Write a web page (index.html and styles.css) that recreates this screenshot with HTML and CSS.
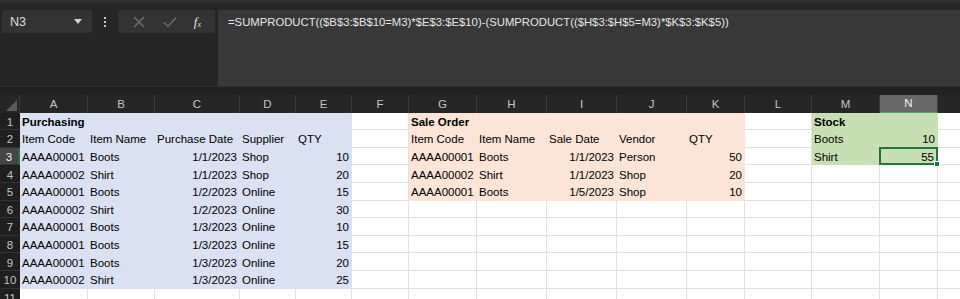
FILE: index.html
```html
<!DOCTYPE html>
<html>
<head>
<meta charset="utf-8">
<link rel="stylesheet" href="styles.css">
</head>
<body>
<div class="app">
  <div class="topstrip"></div>
  <div class="fbar">
    <div class="left">
      <div class="namebox"><span>N3</span><span class="caret"></span></div>
      <div class="kebab"><i></i><i></i><i></i></div>
      <div class="btns">
        <svg class="ico" width="14" height="14" viewBox="0 0 14 14"><path d="M2 2 L12 12 M12 2 L2 12" stroke="#6e6e6e" stroke-width="1.4" fill="none"/></svg>
        <svg class="ico" width="16" height="14" viewBox="0 0 16 14"><path d="M2 7.5 L6 11.5 L14 2.5" stroke="#6e6e6e" stroke-width="1.5" fill="none"/></svg>
        <span class="fx">f<sub>x</sub></span>
      </div>
    </div>
    <div class="formula">=SUMPRODUCT(($B$3:$B$10=M3)*$E$3:$E$10)-(SUMPRODUCT(($H$3:$H$5=M3)*$K$3:$K$5))</div>
  </div>
  <div class="gap"></div>
  <table class="sheet">
    <colgroup>
      <col class="w20"><col class="w68"><col class="w67"><col class="w85"><col class="w56"><col class="w56"><col class="w57"><col class="w68"><col class="w70"><col class="w70"><col class="w70"><col class="w58"><col class="w67"><col class="w68"><col class="w58"><col class="w60">
    </colgroup>
    <tr class="hdr">
      <th class="corner"><span class="tri"></span></th><th>A</th><th>B</th><th>C</th><th>D</th><th>E</th><th>F</th><th>G</th><th>H</th><th>I</th><th>J</th><th>K</th><th>L</th><th>M</th><th class="sel">N</th><th></th>
    </tr>
    <tr>
      <th class="rh">1</th><td class="b bold">Purchasing</td><td class="b"></td><td class="b"></td><td class="b"></td><td class="b"></td><td></td><td class="p bold">Sale Order</td><td class="p"></td><td class="p"></td><td class="p"></td><td class="p"></td><td></td><td class="g bold">Stock</td><td class="g"></td><td></td>
    </tr>
    <tr>
      <th class="rh">2</th><td class="b">Item Code</td><td class="b">Item Name</td><td class="b">Purchase Date</td><td class="b">Supplier</td><td class="b">QTY</td><td></td><td class="p">Item Code</td><td class="p">Item Name</td><td class="p">Sale Date</td><td class="p">Vendor</td><td class="p">QTY</td><td></td><td class="g">Boots</td><td class="g n">10</td><td></td>
    </tr>
    <tr>
      <th class="rh rsel">3</th><td class="b">AAAA00001</td><td class="b">Boots</td><td class="b n">1/1/2023</td><td class="b">Shop</td><td class="b n">10</td><td></td><td class="p">AAAA00001</td><td class="p">Boots</td><td class="p n">1/1/2023</td><td class="p">Person</td><td class="p n">50</td><td></td><td class="g">Shirt</td><td class="g n active"><div class="act">55<span class="handle"></span></div></td><td></td>
    </tr>
    <tr>
      <th class="rh">4</th><td class="b">AAAA00002</td><td class="b">Shirt</td><td class="b n">1/1/2023</td><td class="b">Shop</td><td class="b n">20</td><td></td><td class="p">AAAA00002</td><td class="p">Shirt</td><td class="p n">1/1/2023</td><td class="p">Shop</td><td class="p n">20</td><td></td><td></td><td></td><td></td>
    </tr>
    <tr>
      <th class="rh">5</th><td class="b">AAAA00001</td><td class="b">Boots</td><td class="b n">1/2/2023</td><td class="b">Online</td><td class="b n">15</td><td></td><td class="p">AAAA00001</td><td class="p">Boots</td><td class="p n">1/5/2023</td><td class="p">Shop</td><td class="p n">10</td><td></td><td></td><td></td><td></td>
    </tr>
    <tr>
      <th class="rh">6</th><td class="b">AAAA00002</td><td class="b">Shirt</td><td class="b n">1/2/2023</td><td class="b">Online</td><td class="b n">30</td><td></td><td></td><td></td><td></td><td></td><td></td><td></td><td></td><td></td><td></td>
    </tr>
    <tr>
      <th class="rh">7</th><td class="b">AAAA00001</td><td class="b">Boots</td><td class="b n">1/3/2023</td><td class="b">Online</td><td class="b n">10</td><td></td><td></td><td></td><td></td><td></td><td></td><td></td><td></td><td></td><td></td>
    </tr>
    <tr>
      <th class="rh">8</th><td class="b">AAAA00001</td><td class="b">Boots</td><td class="b n">1/3/2023</td><td class="b">Online</td><td class="b n">15</td><td></td><td></td><td></td><td></td><td></td><td></td><td></td><td></td><td></td><td></td>
    </tr>
    <tr>
      <th class="rh">9</th><td class="b">AAAA00001</td><td class="b">Boots</td><td class="b n">1/3/2023</td><td class="b">Online</td><td class="b n">20</td><td></td><td></td><td></td><td></td><td></td><td></td><td></td><td></td><td></td><td></td>
    </tr>
    <tr>
      <th class="rh">10</th><td class="b">AAAA00002</td><td class="b">Shirt</td><td class="b n">1/3/2023</td><td class="b">Online</td><td class="b n">25</td><td></td><td></td><td></td><td></td><td></td><td></td><td></td><td></td><td></td><td></td>
    </tr>
    <tr>
      <th class="rh">11</th><td></td><td></td><td></td><td></td><td></td><td></td><td></td><td></td><td></td><td></td><td></td><td></td><td></td><td></td><td></td>
    </tr>
  </table>
</div>
</body>
</html>
```

FILE: styles.css
```css
* { box-sizing: border-box; }
html, body { margin: 0; padding: 0; }
body {
  width: 960px;
  height: 299px;
  overflow: hidden;
  background: #1f1f1f;
  font-family: "Liberation Sans", Arial, sans-serif;
}
.app { width: 960px; }
.topstrip {
  height: 10px;
  background: #262626;
  border-top: 3px solid #303030;
}
.fbar {
  display: flex;
  height: 76px;
  background: #262626;
}
.left {
  display: flex;
  align-items: flex-start;
  width: 218px;
  flex: none;
}
.namebox {
  margin-left: 2px;
  width: 90px;
  height: 23px;
  background: #333333;
  border-radius: 2px;
  display: flex;
  align-items: center;
  justify-content: space-between;
  padding: 0 8px 0 8px;
  color: #dcdcdc;
  font-size: 12.5px;
}
.caret {
  width: 0; height: 0;
  border-left: 4px solid transparent;
  border-right: 4px solid transparent;
  border-top: 5px solid #d0d0d0;
  margin-right: 2px;
}
.kebab {
  width: 26px;
  height: 23px;
  display: flex;
  flex-direction: column;
  align-items: center;
  justify-content: center;
  gap: 2px;
}
.kebab i {
  display: block;
  width: 2px; height: 2px;
  background: #c8c8c8;
}
.btns {
  width: 97px;
  height: 23px;
  background: #333333;
  border-radius: 2px;
  display: flex;
  align-items: center;
  justify-content: space-around;
  padding: 0 6px;
}
.fx {
  font-family: "Liberation Serif", serif;
  font-style: italic;
  color: #e0e0e0;
  font-size: 13px;
  line-height: 1;
}
.fx sub { font-size: 8px; vertical-align: -1px; }
.formula {
  flex: 1;
  height: 76px;
  background: #383838;
  border-radius: 2px 0 0 2px;
  color: #e6e6e6;
  font-size: 11.3px;
  padding: 6px 0 0 10px;
}
.gap { height: 9px; background: #212121; border-top: 1px solid #2e2e2e; }
.sheet {
  table-layout: fixed;
  border-collapse: separate;
  border-spacing: 0;
  width: 998px;
  font-size: 11.5px;
  color: #000;
}
.w20 { width: 20px; } .w56 { width: 56px; } .w57 { width: 57px; } .w58 { width: 58px; }
.w60 { width: 60px; } .w67 { width: 67px; } .w68 { width: 68px; } .w70 { width: 70px; } .w85 { width: 85px; }
.hdr th {
  height: 17px;
  background: #262626;
  color: #c4c4c4;
  font-weight: normal;
  font-size: 11.5px;
  border-right: 1px solid #3c3c3c;
  padding: 0;
  text-align: center;
}
.hdr th.sel { background: #686868; color: #f0f0f0; border-bottom: 1px solid #5c9c74; }
.corner { position: relative; }
.tri {
  position: absolute;
  right: 2px; bottom: 2px;
  width: 0; height: 0;
  border-left: 11px solid transparent;
  border-bottom: 11px solid #5a5a5a;
}
.sheet tr { height: 17.6px; }
th.rh {
  background: #1f1f1f;
  color: #c4c4c4;
  font-weight: normal;
  font-size: 11.5px;
  text-align: center;
  padding: 2px 0 0 0;
  line-height: 14px;
  height: 17.6px;
  border-bottom: 1px solid #333;
}
th.rh.rsel { background: #454545; color: #f0f0f0; border-right: 2px solid #217346; }
td {
  background: #ffffff;
  border-right: 1px solid #e1e1e1;
  border-bottom: 1px solid #e1e1e1;
  padding: 2px 2px 0 2px;
  white-space: nowrap;
  overflow: visible;
  height: 17.6px;
  line-height: 14px;
}
td.b { background: #d9e1f2; border-color: #d9e1f2; }
td.p { background: #fce4d6; border-color: #fce4d6; }
td.g { background: #c6e0b4; border-color: #c6e0b4; }
td.n { text-align: right; }
td.bold { font-weight: bold; }
td.active { padding: 0; position: relative; }
.act {
  position: absolute;
  left: -1px; top: -1px; right: -1px; bottom: -1px;
  border: 2px solid #217346;
  text-align: right;
  padding: 1px 2px 0 0;
  line-height: 14px;
}
.handle {
  position: absolute;
  right: -4px; bottom: -4px;
  width: 6px; height: 6px;
  background: #217346;
  border: 1px solid #fff;
}
```
